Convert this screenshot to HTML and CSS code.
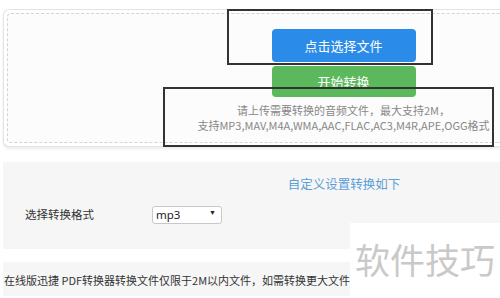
FILE: index.html
```html
<!DOCTYPE html>
<html lang="zh-CN">
<head>
    <meta charset="UTF-8">
    <meta name="viewport" content="width=device-width, initial-scale=1.0">
    <title>音频转换</title>
    <link rel="stylesheet" href="styles.css">
</head>
<body>
<div class="page">
    <section class="upload">
        <div class="drop">
            <button class="btn btn-pick">点击选择文件</button>
            <button class="btn btn-start">开始转换</button>
            <p class="tips">请上传需要转换的音频文件，最大支持2M，<br>支持MP3,MAV,M4A,WMA,AAC,FLAC,AC3,M4R,APE,OGG格式</p>
        </div>
    </section>
    <section class="settings">
        <h3 class="settings-title">自定义设置转换如下</h3>
        <div class="row">
            <label for="format">选择转换格式</label>
            <div class="select-wrap">
                <select id="format">
                    <option>mp3</option>
                    <option>wav</option>
                    <option>aac</option>
                </select>
            </div>
        </div>
    </section>
    <p class="notice">在线版迅捷 PDF转换器转换文件仅限于2M以内文件，如需转换更大文件</p>
</div>
<div class="mark mark-pick"></div>
<div class="mark mark-tips"></div>
<div class="watermark">软件技巧</div>
</body>
</html>
```

FILE: styles.css
```css
html, body {
    margin: 0;
    height: 100%;
    overflow: hidden;
}

body {
    position: relative;
    background-color: #fff;
    font-family: 'Liberation Sans', 'Noto Sans CJK SC', sans-serif;
    color: #333;
}

.page {
    padding: 9px 0 0 3px;
}

.upload {
    border: 1px solid #e4e4e4;
    border-right: none;
    border-radius: 6px 0 0 6px;
    padding: 3px 0 3px 3px;
    background-color: #fff;
    box-shadow: 0 2px 3px rgba(0, 0, 0, 0.08);
}

.drop {
    display: flex;
    flex-direction: column;
    align-items: center;
    height: 130px;
    padding: 15px 0 0 179px;
    box-sizing: border-box;
    border: 1px dashed #d4d4d4;
    border-right: none;
    border-radius: 4px 0 0 4px;
    background-color: #fcfcfc;
}

.btn {
    width: 144px;
    height: 33px;
    border: none;
    border-radius: 4px;
    color: #fff;
    font-family: 'Noto Sans CJK SC', sans-serif;
    font-size: 13px;
    cursor: pointer;
}

.btn-pick {
    background-color: #2b8be8;
}

.btn-start {
    height: 31px;
    margin-top: 4px;
    background-color: #5cb85c;
}

.tips {
    margin: 6px 0 0;
    font-family: 'Noto Sans CJK SC', sans-serif;
    font-size: 11px;
    line-height: 15px;
    color: #888;
    text-align: center;
    white-space: nowrap;
}

.settings {
    margin-top: 15px;
    height: 87px;
    padding-top: 13px;
    box-sizing: border-box;
    background-color: #f6f6f6;
}

.settings-title {
    margin: 0;
    padding-left: 185px;
    font-family: 'Noto Sans CJK SC', sans-serif;
    font-size: 12.5px;
    font-weight: normal;
    line-height: 18px;
    color: #5a9fd6;
    text-align: center;
}

.row {
    display: flex;
    align-items: center;
    margin-top: 12px;
    padding-left: 22px;
}

.row label {
    width: 127px;
    font-family: 'Noto Sans CJK SC', sans-serif;
    font-size: 11.5px;
    color: #333;
}

.select-wrap {
    position: relative;
}

.select-wrap select {
    appearance: none;
    -webkit-appearance: none;
    width: 70px;
    height: 18px;
    padding: 0 0 0 3px;
    border: 1px solid #c8c8c8;
    border-radius: 3px;
    background-color: #fff;
    font-family: 'Noto Sans', sans-serif;
    font-size: 11.5px;
    color: #222;
}

.select-wrap::after {
    content: "▼";
    position: absolute;
    right: 6px;
    top: 4px;
    font-size: 7px;
    color: #222;
    pointer-events: none;
}

.notice {
    margin: 13px 0 0;
    height: 34px;
    padding-left: 1px;
    overflow: hidden;
    background-color: #f6f6f6;
    font-family: 'Noto Sans CJK SC', sans-serif;
    font-size: 11px;
    line-height: 36px;
    color: #333;
    white-space: nowrap;
}

.mark {
    position: absolute;
    border: 2px solid #333;
    box-sizing: border-box;
}

.mark-pick {
    left: 227px;
    top: 9px;
    width: 206px;
    height: 56px;
}

.mark-tips {
    left: 163px;
    top: 87px;
    width: 331px;
    height: 60px;
}

.watermark {
    position: absolute;
    left: 350px;
    top: 223px;
    width: 150px;
    height: 75px;
    padding-top: 14px;
    box-sizing: border-box;
    background-color: #fff;
    font-family: 'Noto Sans CJK SC', sans-serif;
    font-size: 35px;
    line-height: 44px;
    color: #c9c9c9;
    text-align: center;
}
```
